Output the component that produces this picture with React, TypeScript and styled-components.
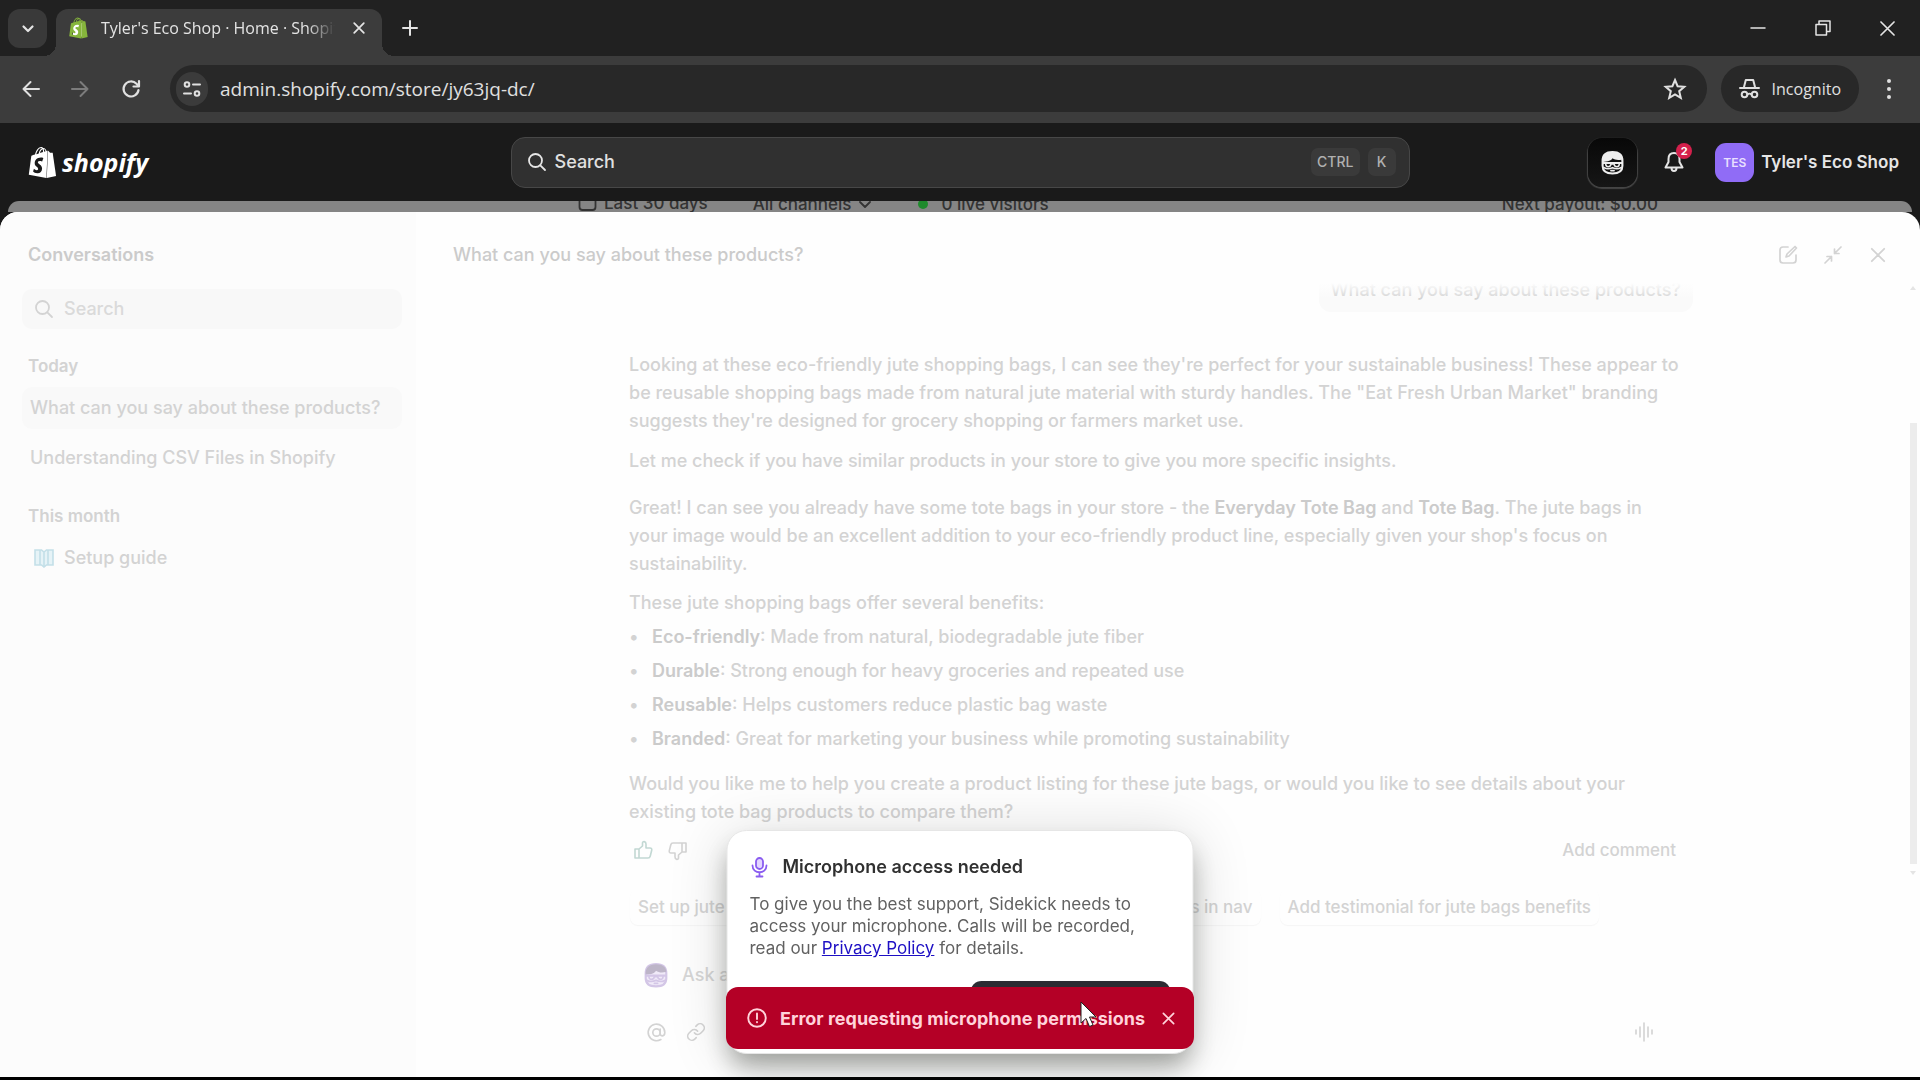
import React from "react";
import styled, { createGlobalStyle, css } from "styled-components";
import { SiShopify } from "react-icons/si";
import { Link as LinkIcon } from "lucide-react";

const ui = `Inter, "Liberation Sans", sans-serif`;
const chromeFont = `"Open Sans", "Noto Sans", sans-serif`;
const faint = "#d3d3d3";
const faintStrong = "#cbcbcb";

const Global = createGlobalStyle`
  *, *::before, *::after { box-sizing: border-box; }
  body { margin: 0; background: #000; font-family: ${ui}; }
  button, input { font: inherit; color: inherit; border: 0; background: none; padding: 0; margin: 0; }
  button { cursor: pointer; }
  svg { display: block; flex: none; }
  h2, h3, p, ul { margin: 0; padding: 0; font-size: inherit; font-weight: inherit; }
`;

const Page = styled.div`
  display: flex;
  flex-direction: column;
  height: 100vh;
  border-bottom: 3px solid #000;
  overflow: hidden;
`;

/* ---------- Browser ---------- */
const TabStrip = styled.div`
  display: flex;
  align-items: stretch;
  height: 56px;
  flex: none;
  background: #212121;
  color: #e4e4e4;
  font-family: ${chromeFont};
`;
const TabSearch = styled.button`
  display: grid;
  place-items: center;
  width: 39px;
  height: 39px;
  margin: 9px 9px 0 8px;
  border-radius: 12px;
  background: #393939;
`;
const Tab = styled.div`
  position: relative;
  display: flex;
  align-items: center;
  width: 326px;
  margin-top: 9px;
  padding: 0 11px 9px 12px;
  gap: 12px;
  border-radius: 12px 12px 0 0;
  background: #3c3c3c;
  &::before, &::after {
    content: "";
    position: absolute;
    bottom: 0;
    width: 12px;
    height: 12px;
  }
  &::before { left: -12px; background: radial-gradient(circle at 0 0, transparent 12px, #3c3c3c 12px); }
  &::after { right: -12px; background: radial-gradient(circle at 100% 0, transparent 12px, #3c3c3c 12px); }
`;
const Favicon = styled(SiShopify)`
  width: 21px;
  height: 22px;
  color: #86b53c;
  background: linear-gradient(#fff, #fff) 45% 70% / 48% 62% no-repeat;
`;
const TabTitle = styled.span`
  flex: 1;
  overflow: hidden;
  white-space: nowrap;
  font-size: 16px;
  line-height: 24px;
  mask-image: linear-gradient(90deg, #000 88%, transparent);
`;
const IconButton = styled.button<{ $w?: number; $h?: number; $dim?: boolean }>`
  display: grid;
  place-items: center;
  width: ${(p) => p.$w ?? 24}px;
  height: ${(p) => p.$h ?? 24}px;
  flex: none;
  color: ${(p) => (p.$dim ? "#7c7c7c" : "inherit")};
`;
const NewTab = styled(IconButton)`
  margin: 16px 0 0 16px;
`;
const MenuButton = styled(IconButton)`
  margin-left: 11px;
`;
const WindowControls = styled.div`
  display: flex;
  align-items: center;
  margin-left: auto;
`;
const Toolbar = styled.div`
  display: flex;
  align-items: center;
  flex: none;
  height: 67px;
  padding: 0 12px 2px 7px;
  background: #3c3c3c;
  color: #e0e0e0;
  font-family: ${chromeFont};
`;
const UrlBar = styled.div`
  display: flex;
  align-items: center;
  flex: 1;
  height: 47px;
  margin: 0 14px 0 13px;
  padding: 0 20px 0 6px;
  gap: 12px;
  border-radius: 24px;
  background: #282828;
`;
const SiteInfo = styled.button`
  display: grid;
  place-items: center;
  width: 32px;
  height: 34px;
  border-radius: 17px;
  background: #3b3b3b;
`;
const UrlInput = styled.input`
  flex: 1;
  min-width: 0;
  font-size: 19px;
  line-height: 28px;
  outline: none;
`;
const Incognito = styled.button`
  display: flex;
  align-items: center;
  height: 47px;
  padding: 0 18px;
  gap: 12px;
  border-radius: 24px;
  background: #282828;
  font-size: 16px;
`;

/* ---------- Shop header ---------- */
const Header = styled.header`
  display: grid;
  grid-template-columns: 1fr minmax(0, 899px) 1fr;
  align-items: center;
  flex: none;
  height: 78px;
  padding: 0 21px;
  background: #1a1a1a;
  color: #e6e6e6;
`;
const Logo = styled.a`
  display: flex;
  align-items: center;
  justify-self: start;
  gap: 4px;
  margin-left: 6px;
  color: #fff;
  text-decoration: none;
  font: italic 700 25px/34px "Open Sans", sans-serif;
`;
const HeaderSearch = styled.label`
  display: flex;
  align-items: center;
  height: 51px;
  padding: 0 13px 0 15px;
  gap: 8px;
  border: 1px solid #474747;
  border-radius: 14px;
  background: #303030;
`;
const SearchInput = styled.input<{ $tone: string }>`
  flex: 1;
  min-width: 0;
  font-size: 18px;
  line-height: 24px;
  font-weight: 500;
  outline: none;
  &::placeholder { color: ${(p) => p.$tone}; opacity: 1; }
`;
const Key = styled.kbd`
  padding: 0 6px;
  min-width: 28px;
  border-radius: 7px;
  background: #3a3a3a;
  color: #b0b0b0;
  font: 500 14px/28px ${ui};
  text-align: center;
`;
const HeaderActions = styled.div`
  display: flex;
  align-items: center;
  justify-content: flex-end;
`;
const SidekickButton = styled.button`
  display: grid;
  place-items: center;
  width: 49px;
  height: 49px;
  border-radius: 14px;
  background: linear-gradient(#080808, #161616);
  box-shadow: 0 1px 1px 1px #454545;
`;
const Bell = styled.button`
  position: relative;
  display: grid;
  place-items: center;
  width: 32px;
  height: 32px;
  margin: 0 25px 0 21px;
`;
const Badge = styled.span`
  position: absolute;
  top: -3px;
  right: -2px;
  width: 16px;
  height: 16px;
  border-radius: 8px;
  background: #d4204c;
  color: #fff;
  font-size: 11px;
  line-height: 16px;
  font-weight: 700;
`;
const Store = styled.button`
  display: flex;
  align-items: center;
  gap: 7px;
  font-size: 17px;
  font-weight: 600;
`;
const Avatar = styled.span`
  width: 39px;
  border-radius: 11px;
  background: #906cf6;
  color: #e9e0ff;
  font-size: 12px;
  font-weight: 600;
  line-height: 39px;
`;

/* ---------- Dimmed dashboard ---------- */
const Stage = styled.div`
  display: flex;
  flex-direction: column;
  flex: 1;
  min-height: 0;
  background: #1a1a1a;
`;
const Dashboard = styled.div`
  display: flex;
  align-items: flex-end;
  flex: none;
  height: 11px;
  margin: 0 8px;
  padding: 0 254px 0 570px;
  border-radius: 16px 16px 0 0;
  background: #858585;
  color: #333;
  font-size: 17px;
  font-weight: 500;
  line-height: 16px;
  overflow: hidden;
`;
const Metric = styled.span<{ $gap?: number }>`
  display: flex;
  align-items: center;
  gap: 7px;
  margin-right: ${(p) => p.$gap ?? 0}px;
  white-space: nowrap;
  &:last-child { margin-left: auto; }
`;
const LiveDot = styled.i`
  width: 10px;
  height: 10px;
  margin-right: 6px;
  border-radius: 5px;
  background: #1f8a2c;
`;

/* ---------- Sidekick panel ---------- */
const Panel = styled.section`
  display: grid;
  grid-template-columns: 416px minmax(0, 1fr);
  flex: 1;
  min-height: 0;
  border-radius: 18px 18px 0 0;
  background: #fefefe;
  overflow: hidden;
  color: ${faint};
  font-size: 18px;
  line-height: 28px;
`;
const Sidebar = styled.aside`
  display: flex;
  flex-direction: column;
  padding: 29px 14px 0 22px;
  background: #fcfcfc;
`;
const SideTitle = styled.h2`
  padding-left: 6px;
  font-weight: 600;
  color: ${faintStrong};
`;
const SideSearch = styled.label`
  display: flex;
  align-items: center;
  gap: 10px;
  height: 40px;
  margin-top: 20px;
  padding: 0 12px;
  border-radius: 10px;
  background: #f8f8f8;
`;
const Group = styled.div`
  margin-top: 23px;
  & + & { margin-top: 15px; }
`;
const GroupTitle = styled.h3`
  padding-left: 6px;
  margin-bottom: 7px;
  font-size: 17px;
  font-weight: 600;
`;
const Conversation = styled.a<{ $active?: boolean; $icon?: boolean }>`
  display: flex;
  align-items: center;
  gap: 10px;
  height: 42px;
  margin-bottom: 8px;
  padding: 0 ${(p) => (p.$icon ? 12 : 8)}px;
  border-radius: 10px;
  background: ${(p) => (p.$active ? "#f9f9f9" : "transparent")};
  color: ${faint};
  font-weight: 500;
  text-decoration: none;
  white-space: nowrap;
`;
const Chat = styled.div`
  display: flex;
  flex-direction: column;
  min-width: 0;
  min-height: 0;
`;
const ChatHeader = styled.div`
  display: flex;
  align-items: center;
  justify-content: space-between;
  flex: none;
  height: 71px;
  padding: 15px 28px 0 37px;
  h2 { font-weight: 500; color: ${faintStrong}; }
`;
const ChatActions = styled.div`
  display: flex;
  gap: 17px;
`;
const Scroller = styled.div`
  display: flex;
  flex: 1;
  min-height: 0;
`;
const Messages = styled.div`
  position: relative;
  display: flex;
  flex-direction: column;
  justify-content: flex-end;
  align-items: center;
  flex: 1;
  min-width: 0;
  padding-bottom: 8px;
  overflow: hidden;
  &::before {
    content: "";
    position: absolute;
    inset: 0 0 auto;
    height: 16px;
    background: linear-gradient(#fefefe, rgba(254, 254, 254, 0));
  }
`;
const column = css`
  width: 100%;
  max-width: 1064px;
`;
const Thread = styled.div`
  ${column}
  display: flex;
  flex-direction: column;
  font-weight: 450;
`;
const Bubble = styled.p`
  align-self: flex-end;
  margin-bottom: 39px;
  padding: 8px 12px;
  border-radius: 12px;
  background: #fafafa;
`;
const Text = styled.p<{ $after: number }>`
  margin-bottom: ${(p) => p.$after}px;
  padding-right: 12px;
  strong { font-weight: 600; color: ${faintStrong}; }
`;
const Benefits = styled.ul`
  display: flex;
  flex-direction: column;
  gap: 6px;
  margin-bottom: 17px;
  list-style: none;
  li { display: flex; }
  li::before { content: "•"; width: 23px; }
  strong { font-weight: 600; color: ${faintStrong}; }
`;
const Feedback = styled.div`
  display: flex;
  align-items: center;
  gap: 10px;
  height: 40px;
  padding: 0 17px 0 2px;
`;
const AddComment = styled.button`
  margin-left: auto;
  font-size: 17px;
  font-weight: 500;
`;
const ScrollTrack = styled.div`
  display: flex;
  flex-direction: column;
  align-items: center;
  justify-content: space-between;
  width: 14px;
  padding: 2px 0;
  color: #e4e4e4;
`;
const Thumb = styled.span`
  width: 7px;
  height: 441px;
  margin-top: auto;
  margin-bottom: 6px;
  background: #ececec;
`;
const Footer = styled.div`
  ${column}
  flex: none;
  align-self: center;
  margin-right: 14px;
`;
const Chips = styled.div`
  display: flex;
  align-items: center;
  gap: 19px;
  height: 58px;
  padding: 0 94px 0 1px;
`;
const Chip = styled.button<{ $push?: boolean }>`
  height: 36px;
  padding: 0 8px;
  border-radius: 8px;
  box-shadow: 0 1px 1px #f5f5f5;
  font-size: 17px;
  font-weight: 500;
  white-space: nowrap;
  margin-left: ${(p) => (p.$push ? "auto" : 0)};
`;
const Ask = styled.label`
  display: flex;
  align-items: center;
  gap: 13px;
  height: 78px;
  padding: 0 14px;
`;
const Tools = styled.div`
  display: flex;
  align-items: center;
  gap: 16px;
  height: 36px;
  margin-bottom: 27px;
  padding: 0 37px 0 15px;
`;
const Voice = styled(IconButton)`
  margin-left: auto;
`;

/* ---------- Overlays ---------- */
const Dialog = styled.div`
  position: fixed;
  left: 50%;
  bottom: 26px;
  width: 467px;
  height: 224px;
  padding: 22px;
  transform: translateX(-50%);
  border: 1px solid #e6e6e6;
  border-radius: 20px;
  background: #fff;
  box-shadow: 0 16px 26px -4px rgba(48, 52, 44, 0.42), 0 4px 60px rgba(0, 0, 0, 0.14);
  color: #616161;
  font-size: 17px;
  line-height: 22px;
`;
const DialogTitle = styled.h2`
  display: flex;
  align-items: center;
  gap: 13px;
  margin: 1px 0 13px;
  line-height: 26px;
  font-size: 18px;
  font-weight: 600;
  color: #303030;
`;
const PolicyLink = styled.a`
  color: #1d0fc4;
`;
const DialogButton = styled.button`
  display: block;
  width: 200px;
  height: 36px;
  margin: 22px 0 0 auto;
  border-radius: 11px;
  background: #2c2c33;
  color: #fff;
  font-weight: 600;
`;
const Toast = styled.div`
  position: fixed;
  left: 50%;
  bottom: 31px;
  display: flex;
  align-items: center;
  gap: 13px;
  width: 468px;
  height: 62px;
  padding: 0 19px 0 21px;
  transform: translateX(-50%);
  border-radius: 12px;
  background: #b40026;
  color: #ffd3db;
  font-size: 18px;
  font-weight: 700;
  white-space: nowrap;
  p { flex: 1; }
`;
const Cursor = styled.svg`
  position: fixed;
  left: 1080px;
  top: 1001px;
`;

const stroke = { fill: "none", stroke: "currentColor", strokeLinecap: "round", strokeLinejoin: "round" } as const;

const Magnifier = ({ size = 20 }: { size?: number }) => (
  <svg width={size} height={size} viewBox="0 0 20 20" {...stroke} strokeWidth="1.8">
    <circle cx="8.5" cy="8.5" r="6.5" />
    <path d="M13.3 13.3 18 18" />
  </svg>
);

const Cross = ({ size, w = 2 }: { size: number; w?: number }) => (
  <svg width={size} height={size} viewBox="0 0 16 16" {...stroke} strokeWidth={w}>
    <path d="M2.5 2.5l11 11M13.5 2.5l-11 11" />
  </svg>
);

type FaceProps = { size: number; line: string; hair: string; skin: string };
const Face = ({ size, line, hair, skin }: FaceProps) => (
  <svg width={size} height={size} viewBox="0 0 24 24" fill="none" stroke={line} strokeLinecap="round" strokeLinejoin="round">
    <path d="M2.500 10.500C2.500 5 6 2 12 2s9.500 3 9.500 8.500V15c0 5-3.500 7.500-9.500 7.500S2.500 20 2.500 15z" fill={skin} strokeWidth="2" />
    <path d="M2.500 11.500c-.5-6 3-9.500 9.500-9.500s9.500 3 9.500 7c-4 1.200-7 .7-9.500-1-1 2-4 3.500-9.500 3.500z" fill={hair} stroke="none" />
    <path d="M3 12.500h18" strokeWidth="2" />
    <path d="M5.500 13.500c0 3.500 4.500 3.200 5 0M13.500 13.500c.5 3.200 5 3.500 5 0M10.500 13.500h3" strokeWidth="1.500" />
    <path d="M4 17c2.500 1.500 4.500 1.500 8 0 3.500 1.500 5.500 1.500 8 0M10.500 19.800h3" strokeWidth="1.600" />
  </svg>
);

const benefits = [
  ["Eco-friendly", "Made from natural, biodegradable jute fiber"],
  ["Durable", "Strong enough for heavy groceries and repeated use"],
  ["Reusable", "Helps customers reduce plastic bag waste"],
  ["Branded", "Great for marketing your business while promoting sustainability"],
];

function Browser() {
  return (
    <>
      <TabStrip>
        <TabSearch aria-label="Search tabs">
          <svg width="14" height="14" viewBox="0 0 14 14" {...stroke} strokeWidth="2.200"><path d="M2.500 4.500 7 9l4.500-4.500" /></svg>
        </TabSearch>
        <Tab>
          <Favicon />
          <TabTitle>Tyler's Eco Shop · Home · Shopify</TabTitle>
          <IconButton aria-label="Close tab"><Cross size={14} /></IconButton>
        </Tab>
        <NewTab aria-label="New tab">
          <svg width="18" height="18" viewBox="0 0 18 18" {...stroke} strokeWidth="2"><path d="M9 2v14M2 9h14" /></svg>
        </NewTab>
        <WindowControls>
          <IconButton $w={65} $h={56} aria-label="Minimize">
            <svg width="16" height="16" viewBox="0 0 16 16" {...stroke} strokeWidth="1.500"><path d="M1 8h14" /></svg>
          </IconButton>
          <IconButton $w={65} $h={56} aria-label="Restore">
            <svg width="16" height="16" viewBox="0 0 16 16" {...stroke} strokeWidth="1.500"><path d="M1 4.500h10.500V15H1zM4 4V1h11v10.500h-3" /></svg>
          </IconButton>
          <IconButton $w={65} $h={56} aria-label="Close window"><Cross size={19} w={1.4} /></IconButton>
        </WindowControls>
      </TabStrip>
      <Toolbar>
        <IconButton $w={48} $h={40} aria-label="Back">
          <svg width="20" height="20" viewBox="0 0 20 20" {...stroke} strokeWidth="2"><path d="M18 10H2.500M9.500 3l-7 7 7 7" /></svg>
        </IconButton>
        <IconButton $w={50} $h={40} $dim aria-label="Forward">
          <svg width="20" height="20" viewBox="0 0 20 20" {...stroke} strokeWidth="2"><path d="M2 10h15.500M10.500 3l7 7-7 7" /></svg>
        </IconButton>
        <IconButton $w={52} $h={40} aria-label="Reload">
          <svg width="20" height="20" viewBox="0 0 20 20" {...stroke} strokeWidth="2.200"><path d="M17.500 11A7.500 7.500 0 1 1 15.500 4.800L18 7.200M18 2v5.500h-5.500" /></svg>
        </IconButton>
        <UrlBar>
          <SiteInfo aria-label="Site information">
            <svg width="18" height="18" viewBox="0 0 18 18" {...stroke} strokeWidth="2"><circle cx="4" cy="4.500" r="2.300" /><path d="M10 4.500h7M1 13.500h7" /><circle cx="14" cy="13.500" r="2.300" /></svg>
          </SiteInfo>
          <UrlInput aria-label="Address" defaultValue="admin.shopify.com/store/jy63jq-dc/" />
          <IconButton aria-label="Bookmark">
            <svg width="24" height="24" viewBox="0 0 24 24" {...stroke} strokeLinejoin="miter" strokeWidth="2"><path d="m12 3 2.600 6.200 6.700.6-5.100 4.400 1.600 6.600-5.800-3.500-5.800 3.500 1.600-6.600-5.100-4.400 6.700-.6z" /></svg>
          </IconButton>
        </UrlBar>
        <Incognito>
          <svg width="21" height="21" viewBox="0 0 21 21" {...stroke} strokeWidth="2"><path d="M5 9l1.800-7h7.400L16 9M1 10h19M8.500 16.500c1-1 3-1 4 0" /><circle cx="5.500" cy="16.500" r="2.800" /><circle cx="15.500" cy="16.500" r="2.800" /></svg>
          Incognito
        </Incognito>
        <MenuButton $w={38} $h={40} aria-label="Browser menu">
          <svg width="6" height="22" viewBox="0 0 6 22" fill="currentColor"><circle cx="3" cy="3" r="2" /><circle cx="3" cy="11" r="2" /><circle cx="3" cy="19" r="2" /></svg>
        </MenuButton>
      </Toolbar>
    </>
  );
}

function ShopHeader() {
  return (
    <Header>
      <Logo href="#home"><SiShopify size={31} />shopify</Logo>
      <HeaderSearch>
        <Magnifier />
        <SearchInput $tone="#e0e0e0" aria-label="Search store" placeholder="Search" />
        <Key>CTRL</Key>
        <Key>K</Key>
      </HeaderSearch>
      <HeaderActions>
        <SidekickButton aria-label="Sidekick"><Face size={25} line="#eeeeee" hair="#eeeeee" skin="#111111" /></SidekickButton>
        <Bell aria-label="Notifications">
          <svg width="24" height="24" viewBox="0 0 24 24" {...stroke} strokeWidth="2"><path d="M12 3C8.500 3 6.500 5.500 6.500 9v3L3.500 17.500h17L17.500 12V9C17.500 5.500 15.500 3 12 3zM9.500 18c0 4 5 4 5 0" /></svg>
          <Badge>2</Badge>
        </Bell>
        <Store><Avatar>TES</Avatar>Tyler's Eco Shop</Store>
      </HeaderActions>
    </Header>
  );
}

function ConversationList() {
  return (
    <Sidebar>
      <SideTitle>Conversations</SideTitle>
      <SideSearch>
        <Magnifier />
        <SearchInput $tone="#dadada" aria-label="Search conversations" placeholder="Search" />
      </SideSearch>
      <Group>
        <GroupTitle>Today</GroupTitle>
        <Conversation href="#products" $active>What can you say about these products?</Conversation>
        <Conversation href="#csv">Understanding CSV Files in Shopify</Conversation>
      </Group>
      <Group>
        <GroupTitle>This month</GroupTitle>
        <Conversation href="#setup" $icon>
          <svg width="20" height="20" viewBox="0 0 20 20" fill="#e6f3f7" stroke="#c3dfe8" strokeWidth="1.600"><path d="M1 2h6.500L10 4l2.500-2H19v15h-6.500L10 19l-2.500-2H1zM10 4v15M6 2v15M14 2v15" /></svg>
          Setup guide
        </Conversation>
      </Group>
    </Sidebar>
  );
}

const thumb = "M2 9h4v9H2zM6 9l3.500-3V3c0-2 3.500-2 3.500 1v4h4c1.500 0 2 1 1.700 2.200l-1.500 6c-.3 1.200-1 1.800-2.200 1.800H6z";

function ChatPane() {
  return (
    <Chat>
      <ChatHeader>
        <h2>What can you say about these products?</h2>
        <ChatActions>
          <IconButton $w={28} aria-label="New conversation">
            <svg width="20" height="20" viewBox="0 0 20 20" {...stroke} strokeWidth="1.700"><path d="M10 2H5C3 2 2 3 2 5v10c0 2 1 3 3 3h10c2 0 3-1 3-3v-5M8 12l1-3 8-7.500L18.500 3 11 11z" /></svg>
          </IconButton>
          <IconButton $w={28} aria-label="Exit full screen">
            <svg width="20" height="20" viewBox="0 0 20 20" {...stroke} strokeWidth="1.700"><path d="m18 2-6.500 6.500M11.500 4v4.500H16M2 18l6.500-6.500M4 11.500h4.500V16" /></svg>
          </IconButton>
          <IconButton $w={28} aria-label="Close"><Cross size={18} w={1.6} /></IconButton>
        </ChatActions>
      </ChatHeader>
      <Scroller>
        <Messages>
          <Thread>
            <Bubble>What can you say about these products?</Bubble>
            <Text $after={12}>
              Looking at these eco-friendly jute shopping bags, I can see they're perfect for your sustainable business! These appear to be reusable shopping bags made from natural jute material with sturdy handles. The "Eat Fresh Urban Market" branding suggests they're designed for grocery shopping or farmers market use.
            </Text>
            <Text $after={19}>Let me check if you have similar products in your store to give you more specific insights.</Text>
            <Text $after={11}>
              Great! I can see you already have some tote bags in your store - the <strong>Everyday Tote Bag</strong> and <strong>Tote Bag</strong>. The jute bags in your image would be an excellent addition to your eco-friendly product line, especially given your shop's focus on sustainability.
            </Text>
            <Text $after={6}>These jute shopping bags offer several benefits:</Text>
            <Benefits>
              {benefits.map(([name, note]) => (
                <li key={name}><p><strong>{name}</strong>: {note}</p></li>
              ))}
            </Benefits>
            <Text $after={4}>
              Would you like me to help you create a product listing for these jute bags, or would you like to see details about your existing tote bag products to compare them?
            </Text>
            <Feedback>
              <IconButton aria-label="Good answer">
                <svg width="21" height="21" viewBox="0 0 21 21" {...stroke} stroke="#c2d8d3" strokeWidth="1.600"><path d={thumb} /></svg>
              </IconButton>
              <IconButton aria-label="Bad answer">
                <svg width="21" height="21" viewBox="0 0 21 21" {...stroke} strokeWidth="1.600"><path d={thumb} transform="rotate(180 10.500 10.500)" /></svg>
              </IconButton>
              <AddComment>Add comment</AddComment>
            </Feedback>
          </Thread>
        </Messages>
        <ScrollTrack aria-hidden>
          <svg width="8" height="6" viewBox="0 0 8 6" fill="currentColor"><path d="M4 1l3 4H1z" /></svg>
          <Thumb />
          <svg width="8" height="6" viewBox="0 0 8 6" fill="currentColor"><path d="M4 5 1 1h6z" /></svg>
        </ScrollTrack>
      </Scroller>
      <Footer>
        <Chips>
          <Chip>Set up jute bags</Chip>
          <Chip $push>Feature jute bags in nav</Chip>
          <Chip>Add testimonial for jute bags benefits</Chip>
        </Chips>
        <Ask>
          <Face size={26} line="#d3c6e6" hair="#bdb5c8" skin="#f0eaf8" />
          <SearchInput $tone="#d6d6d6" aria-label="Ask Sidekick" placeholder="Ask anything..." />
        </Ask>
        <Tools>
          <IconButton aria-label="Mention">
            <svg width="21" height="21" viewBox="0 0 24 24" {...stroke} strokeWidth="1.900"><circle cx="12" cy="12" r="4.200" /><path d="M16.200 8v5c0 4 5.300 4 5.300-1A9.500 9.500 0 1 0 17 20" /></svg>
          </IconButton>
          <IconButton aria-label="Attach"><LinkIcon size={20} strokeWidth={1.9} /></IconButton>
          <Voice aria-label="Voice">
            <svg width="20" height="20" viewBox="0 0 20 20" {...stroke} strokeWidth="1.600"><path d="M2 8v4M6 5v10M10 1v18M14 5v10M18 8v4" /></svg>
          </Voice>
        </Tools>
      </Footer>
    </Chat>
  );
}

export default function App() {
  return (
    <Page>
      <Global />
      <Browser />
      <ShopHeader />
      <Stage>
        <Dashboard>
          <Metric $gap={45}>
            <svg width="19" height="19" viewBox="0 0 19 19" {...stroke} strokeWidth="1.800"><path d="M2 6V3h15v3M1.500 6h16v8c0 2-1 3-3 3h-10c-2 0-3-1-3-3z" /></svg>
            Last 30 days
          </Metric>
          <Metric $gap={46}>
            All channels
            <svg width="14" height="12" viewBox="0 0 14 12" {...stroke} strokeWidth="1.800"><path d="M2 4l5 5 5-5" /></svg>
          </Metric>
          <Metric><LiveDot />0 live visitors</Metric>
          <Metric>Next payout: $0.00</Metric>
        </Dashboard>
        <Panel>
          <ConversationList />
          <ChatPane />
        </Panel>
      </Stage>
      <Dialog role="dialog" aria-labelledby="mic-title">
        <DialogTitle id="mic-title">
          <svg width="20" height="22" viewBox="0 0 20 22" {...stroke} stroke="#8a5cf0" strokeWidth="1.800"><rect x="6.500" y="2" width="7" height="11" rx="3.500" fill="#e2d5ff" /><path d="M3 9.500c0 9 14 9 14 0M10 16.500V20M7 20.500h6" /></svg>
          Microphone access needed
        </DialogTitle>
        <p>
          To give you the best support, Sidekick needs to access your microphone. Calls will be recorded, read our <PolicyLink href="#privacy">Privacy Policy</PolicyLink> for details.
        </p>
        <DialogButton aria-label="Allow microphone" />
      </Dialog>
      <Toast role="alert">
        <svg width="20" height="20" viewBox="0 0 20 20" {...stroke} strokeWidth="1.900"><circle cx="10" cy="10" r="8.800" /><path d="M10 5.500v5.500M10 14v.2" /></svg>
        <p>Error requesting microphone permissions</p>
        <IconButton $w={20} aria-label="Dismiss"><Cross size={15} w={1.8} /></IconButton>
      </Toast>
      <Cursor width="18" height="28" viewBox="0 0 18 28" fill="#fff" stroke="#222" strokeWidth="1">
        <path d="M1 1v21l5-4.500 3.500 8 3.500-1.500-3.500-8H16z" />
      </Cursor>
    </Page>
  );
}
